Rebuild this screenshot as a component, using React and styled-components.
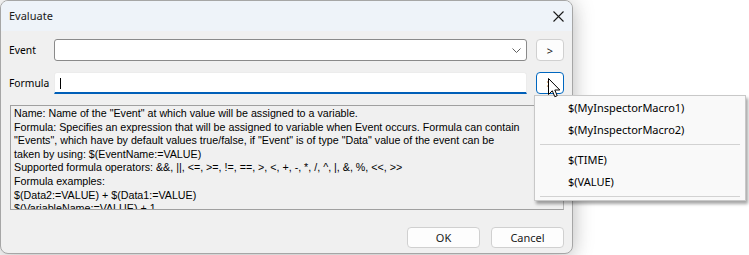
import React from "react";
import styled, { createGlobalStyle, css } from "styled-components";

const Global = createGlobalStyle`
  html, body { margin: 0; padding: 0; background: #ffffff; }
  body { overflow: hidden; }
  * { box-sizing: border-box; }
`;

const UI_FONT = `"Noto Sans", "Open Sans", sans-serif`;
const CLASSIC_FONT = `"Liberation Sans", Arial, sans-serif`;

const Page = styled.div`
  position: relative;
  width: 749px;
  height: 255px;
  overflow: hidden;
  background: #ffffff;
  font-family: ${UI_FONT};
`;

const Dialog = styled.div`
  width: 573px;
  height: 254px;
  display: flex;
  flex-direction: column;
  border: 1px solid #a6a6a6;
  border-radius: 8px;
  overflow: hidden;
  background: #f0f0f0;
  box-shadow: 0 0 22px rgba(0, 0, 0, 0.22), 0 8px 18px rgba(0, 0, 0, 0.08);
`;

const TitleBar = styled.div`
  height: 30px;
  flex: none;
  display: flex;
  align-items: center;
  justify-content: space-between;
  padding: 0 8px 0 8px;
  background: #eef3f9;
`;

const Title = styled.span`
  font-size: 11px;
  color: #1a1a1a;
  margin-top: -1px;
`;

const CloseIcon = styled.svg`
  width: 11px;
  height: 11px;
  display: block;
`;

const Body = styled.div`
  flex: 1;
  display: flex;
  flex-direction: column;
  padding: 8px 8px 5px 8px;
`;

const FieldRow = styled.div`
  display: flex;
  align-items: center;
  height: 22px;
  margin-bottom: 11px;
`;

const Label = styled.span`
  width: 45px;
  flex: none;
  font-size: 10.3px;
  color: #000;
`;

const Combo = styled.div`
  flex: 1;
  height: 22px;
  display: flex;
  align-items: center;
  justify-content: flex-end;
  padding-right: 5px;
  background: #ffffff;
  border: 1px solid #8a8a8a;
  border-radius: 3px;
`;

const TextInput = styled.div`
  flex: 1;
  height: 22px;
  display: flex;
  align-items: center;
  padding-left: 5px;
  background: #ffffff;
  border: 1px solid #ececec;
  border-bottom: 2px solid #005fb8;
  border-radius: 3px 3px 0 0;
`;

const Caret = styled.span`
  width: 1px;
  height: 11px;
  background: #000;
  margin-top: 1px;
`;

const SmallButton = styled.div`
  width: 28px;
  height: 22px;
  flex: none;
  margin-left: 9px;
  display: flex;
  align-items: center;
  justify-content: center;
  font-size: 11px;
  color: #1a1a1a;
  background: #fdfdfd;
  border: 1px solid #d0d0d0;
  border-radius: 4px;
  ${(p) =>
    p.$focused &&
    css`
      border-color: #0067c0;
      background: #ffffff;
    `}
`;

const Description = styled.div`
  height: 105px;
  margin-left: 1px;
  padding: 1px 0 0 3px;
  overflow: hidden;
  border: 1px solid #a0a0a0;
  border-right-color: #b5b5b5;
  background: #f0f0f0;
  font-family: ${CLASSIC_FONT};
  font-size: 10.7px;
  line-height: 13.6px;
  color: #000;
`;

const DescLine = styled.div`
  white-space: pre;
`;

const Footer = styled.div`
  display: flex;
  justify-content: flex-end;
  gap: 11px;
  margin-top: 17px;
`;

const DialogButton = styled.div`
  width: 73px;
  height: 21px;
  display: flex;
  align-items: center;
  justify-content: center;
  font-size: 11px;
  color: #1a1a1a;
  background: #fdfdfd;
  border: 1px solid #d0d0d0;
  border-radius: 4px;
`;

const Menu = styled.div`
  position: absolute;
  left: 534px;
  top: 95px;
  width: 212px;
  height: 106px;
  padding-top: 0;
  background: #f9f9f9;
  border: 1px solid #c8c8c8;
  box-shadow: 2px 3px 3px rgba(0, 0, 0, 0.35);
  font-size: 11px;
  color: #000;
`;

const MenuItem = styled.div`
  height: 22px;
  display: flex;
  align-items: center;
  padding-left: 33px;
`;

const MenuSeparator = styled.div`
  height: 8px;
  display: flex;
  align-items: center;
  padding: 0 5px;
  &::after {
    content: "";
    flex: 1;
    height: 1px;
    background: #d2d2d2;
  }
`;

const Cursor = styled.svg`
  position: absolute;
  left: 548px;
  top: 78px;
  width: 13px;
  height: 20px;
`;

const lines = [
  'Name: Name of the "Event" at which value will be assigned to a variable.',
  'Formula: Specifies an expression that will be assigned to variable when Event occurs. Formula can contain',
  '"Events", which have by default values true/false, if "Event" is of type "Data" value of the event can be',
  "taken by using: $(EventName:=VALUE)",
  "Supported formula operators: &&, ||, <=, >=, !=, ==, >, <, +, -, *, /, ^, |, &, %, <<, >>",
  "Formula examples:",
  "$(Data2:=VALUE) + $(Data1:=VALUE)",
  "$(VariableName:=VALUE) + 1",
];

export default function App() {
  return (
    <Page>
      <Global />
      <Dialog>
        <TitleBar>
          <Title>Evaluate</Title>
          <CloseIcon viewBox="0 0 11 11">
            <path d="M0.5 0.5 L10.5 10.5 M10.5 0.5 L0.5 10.5" stroke="#1a1a1a" strokeWidth="1.1" fill="none" />
          </CloseIcon>
        </TitleBar>
        <Body>
          <FieldRow>
            <Label>Event</Label>
            <Combo>
              <svg width="9" height="5" viewBox="0 0 9 5">
                <path d="M0.5 0.5 L4.5 4.5 L8.5 0.5" stroke="#5f5f5f" strokeWidth="1" fill="none" />
              </svg>
            </Combo>
            <SmallButton>&gt;</SmallButton>
          </FieldRow>
          <FieldRow>
            <Label>Formula</Label>
            <TextInput>
              <Caret />
            </TextInput>
            <SmallButton $focused>&gt;</SmallButton>
          </FieldRow>
          <Description>
            {lines.map((l, i) => (
              <DescLine key={i}>{l}</DescLine>
            ))}
          </Description>
          <Footer>
            <DialogButton>OK</DialogButton>
            <DialogButton>Cancel</DialogButton>
          </Footer>
        </Body>
      </Dialog>
      <Menu>
        <MenuItem>$(MyInspectorMacro1)</MenuItem>
        <MenuItem>$(MyInspectorMacro2)</MenuItem>
        <MenuSeparator />
        <MenuItem>$(TIME)</MenuItem>
        <MenuItem>$(VALUE)</MenuItem>
        <MenuSeparator />
      </Menu>
      <Cursor viewBox="0 0 13 20">
        <path
          d="M0.5 0.5 L0.5 16.5 L4.3 12.8 L6.8 18.7 L9.2 17.7 L6.8 12 L11.8 12 Z"
          fill="#ffffff"
          stroke="#000000"
          strokeWidth="1"
          strokeLinejoin="miter"
        />
      </Cursor>
    </Page>
  );
}
